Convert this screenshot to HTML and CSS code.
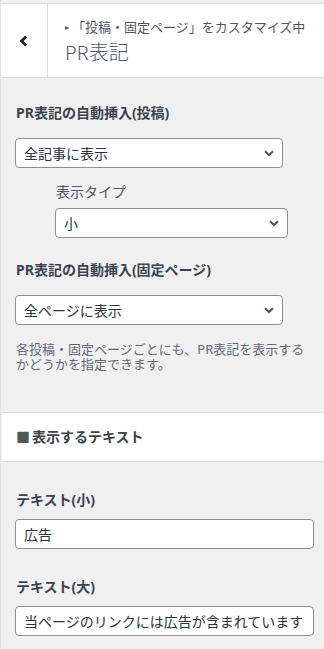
FILE: index.html
```html
<!DOCTYPE html>
<html lang="ja">
<head>
    <meta charset="UTF-8">
    <meta name="viewport" content="width=device-width, initial-scale=1.0">
    <title>PR表記</title>
    <link rel="stylesheet" href="styles.css">
</head>
<body>
    <div class="customizer">
        <div class="panel-header">
            <button class="back-btn" type="button" aria-label="戻る">
                <svg width="10" height="12" viewBox="0 0 10 12">
                    <path d="M7.2 1.5 L2.6 6 L7.2 10.5" fill="none" stroke="#1d2327" stroke-width="2.8"/>
                </svg>
            </button>
            <div class="panel-title">
                <span class="action"><span class="arrow">▸</span>「投稿・固定ページ」をカスタマイズ中</span>
                <h2>PR表記</h2>
            </div>
        </div>

        <div class="controls">
            <div class="control first">
                <label class="control-title">PR表記の自動挿入(投稿)</label>
                <div class="select-wrap post">
                    <select><option>全記事に表示</option></select>
                    <svg class="chevron" width="10" height="7" viewBox="0 0 10 7"><path d="M1 1.2 L5 5 L9 1.2" fill="none" stroke="#50575e" stroke-width="2"/></svg>
                </div>
                <div class="sub-control">
                    <label class="sub-title">表示タイプ</label>
                    <div class="select-wrap type">
                        <select><option>小</option></select>
                        <svg class="chevron" width="10" height="7" viewBox="0 0 10 7"><path d="M1 1.2 L5 5 L9 1.2" fill="none" stroke="#50575e" stroke-width="2"/></svg>
                    </div>
                </div>
            </div>

            <div class="control">
                <label class="control-title">PR表記の自動挿入(固定ページ)</label>
                <div class="select-wrap post">
                    <select><option>全ページに表示</option></select>
                    <svg class="chevron" width="10" height="7" viewBox="0 0 10 7"><path d="M1 1.2 L5 5 L9 1.2" fill="none" stroke="#50575e" stroke-width="2"/></svg>
                </div>
                <p class="description">各投稿・固定ページごとにも、PR表記を表示するかどうかを指定できます。</p>
            </div>
        </div>

        <div class="section-head"><span class="square">■</span>表示するテキスト</div>

        <div class="controls">
            <div class="control text-first">
                <label class="control-title">テキスト(小)</label>
                <input type="text" value="広告">
            </div>
            <div class="control text-second">
                <label class="control-title">テキスト(大)</label>
                <input type="text" value="当ページのリンクには広告が含まれています">
            </div>
        </div>
    </div>
</body>
</html>
```

FILE: styles.css
```css
body {
    margin: 0;
    background-color: #f0f0f1;
    font-family: "Noto Sans", "Noto Sans CJK JP", sans-serif;
    color: #50575e;
}
.customizer {
    width: 324px;
    height: 649px;
    overflow: hidden;
    border-left: 1px solid #e2e2e4;
    box-sizing: border-box;
}
.panel-header {
    display: flex;
    margin-top: 3px;
    height: 75px;
    box-sizing: border-box;
    background-color: white;
    border-top: 1px solid #dcdcde;
    border-bottom: 1px solid #dcdcde;
}
.back-btn {
    width: 48px;
    padding: 0;
    background: white;
    border: none;
    border-right: 1px solid #dcdcde;
    display: flex;
    justify-content: center;
    align-items: center;
    margin-left: -1px;
}
.panel-title {
    padding: 15px 0 0 17px;
}
.action {
    display: block;
    font-size: 13px;
    line-height: 16px;
    white-space: nowrap;
}
.arrow {
    font-size: 8px;
    margin-right: 3px;
    vertical-align: 2px;
}
.panel-title h2 {
    margin: 5px 0 0;
    font-size: 20px;
    font-weight: 300;
    line-height: 26px;
    color: #50575e;
}
.controls {
    padding: 0 12px 0 14px;
}
.control {
    margin-top: 22px;
}
.control.first {
    margin-top: 25px;
}
.control-title {
    display: block;
    font-size: 14px;
    font-weight: 700;
    line-height: 20px;
    color: #3c434a;
    padding-left: 1px;
    margin-bottom: 15px;
}
.select-wrap {
    position: relative;
}
.select-wrap.post {
    width: 268px;
}
.select-wrap.type {
    width: 233px;
}
select, input {
    display: block;
    width: 100%;
    height: 30px;
    box-sizing: border-box;
    border: 1px solid #8c8f94;
    border-radius: 4px;
    background-color: white;
    font-family: "Noto Sans", "Noto Sans CJK JP", sans-serif;
    font-size: 14px;
    color: #2c3338;
    padding: 0 8px;
    appearance: none;
}
.chevron {
    position: absolute;
    right: 9px;
    top: 12px;
    pointer-events: none;
}
.sub-control {
    margin: 14px 0 0 40px;
}
.sub-title {
    display: block;
    font-size: 14px;
    line-height: 20px;
    padding-left: 1px;
    margin-bottom: 6px;
}
.description {
    margin: 17px 0 0 1px;
    font-size: 13px;
    line-height: 15px;
    color: #646970;
}
.section-head {
    margin-top: 40px;
    margin-left: 1px;
    height: 50px;
    box-sizing: border-box;
    background-color: white;
    border-top: 1px solid #dcdcde;
    border-bottom: 1px solid #dcdcde;
    padding: 14px 0 0 14px;
    font-size: 14px;
    font-weight: 700;
    line-height: 20px;
    color: #3c434a;
}
.square {
    color: #50575e;
    margin-right: 2px;
}
.control.text-first {
    margin-top: 28px;
}
.control.text-second {
    margin-top: 28px;
}
.text-first .control-title,
.text-second .control-title {
    margin-bottom: 9px;
}
input {
    width: 299px;
    padding: 0 8px;
}
```
